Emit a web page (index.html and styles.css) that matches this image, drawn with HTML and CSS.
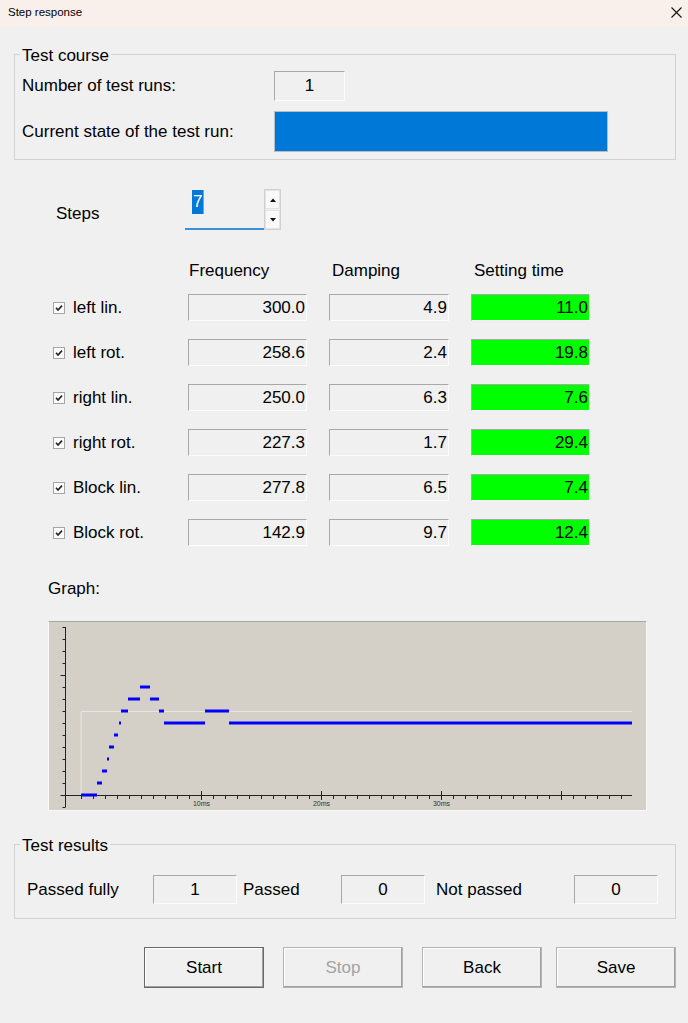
FILE: index.html
```html
<!DOCTYPE html>
<html lang="en">
<head>
    <meta charset="UTF-8">
    <meta name="viewport" content="width=device-width, initial-scale=1.0">
    <title>Step response</title>
    <link rel="stylesheet" href="styles.css">
</head>
<body>
    <div class="titlebar">
        <span class="title">Step response</span>
        <svg class="close" width="11" height="11" viewBox="0 0 11 11">
            <path d="M0.5 0.5 L10.5 10.5 M10.5 0.5 L0.5 10.5" stroke="#111" stroke-width="1.1" fill="none"/>
        </svg>
    </div>

    <!-- Test course -->
    <fieldset class="group group-course">
        <legend>Test course</legend>
        <div class="course-grid">
            <span class="label">Number of test runs:</span>
            <div class="field field-runs">1</div>
            <span class="label">Current state of the test run:</span>
            <div class="progress"><div class="progress-fill"></div></div>
        </div>
    </fieldset>

    <!-- Steps -->
    <div class="steps-row">
        <span class="steps-label">Steps</span>
        <div class="spin">
            <div class="spin-text"><span class="selected">7</span></div>
            <div class="spin-buttons">
                <div class="spin-btn">
                    <svg width="6" height="4" viewBox="0 0 6 4"><path d="M0 4 L3 0.5 L6 4 Z" fill="#111"/></svg>
                </div>
                <div class="spin-btn">
                    <svg width="6" height="4" viewBox="0 0 6 4"><path d="M0 0 L3 3.5 L6 0 Z" fill="#111"/></svg>
                </div>
            </div>
        </div>
    </div>

    <!-- Values table -->
    <div class="table table-head">
        <span></span>
        <span class="col-head">Frequency</span>
        <span class="col-head">Damping</span>
        <span class="col-head">Setting time</span>
    </div>
    <div class="table table-rows" id="rows"></div>

    <!-- Graph -->
    <div class="graph-label">Graph:</div>
    <div class="graph">
        <svg id="graph" width="598" height="189" viewBox="0 0 598 189"></svg>
    </div>

    <!-- Test results -->
    <fieldset class="group group-results">
        <legend>Test results</legend>
        <div class="results-row">
            <span class="res-label res-fully">Passed fully</span>
            <div class="field field-res">1</div>
            <span class="res-label res-passed">Passed</span>
            <div class="field field-res">0</div>
            <span class="res-label res-not">Not passed</span>
            <div class="field field-res">0</div>
        </div>
    </fieldset>

    <div class="buttons">
        <button class="btn btn-default">Start</button>
        <button class="btn" disabled>Stop</button>
        <button class="btn">Back</button>
        <button class="btn btn-last">Save</button>
    </div>

    <script>
        // Axis rows of the step table
        const rows = [
            ['left lin.', '300.0', '4.9', '11.0'],
            ['left rot.', '258.6', '2.4', '19.8'],
            ['right lin.', '250.0', '6.3', '7.6'],
            ['right rot.', '227.3', '1.7', '29.4'],
            ['Block lin.', '277.8', '6.5', '7.4'],
            ['Block rot.', '142.9', '9.7', '12.4']
        ];

        const checkSvg = '<svg class="check" width="12" height="12" viewBox="0 0 12 12">' +
            '<rect x="0.5" y="0.5" width="11" height="11" fill="#fbfbfb" stroke="#a6a6a6"/>' +
            '<path d="M3 5.8 L5 8 L9 3.6" stroke="#222" stroke-width="1.6" fill="none"/></svg>';

        const table = document.getElementById('rows');
        rows.forEach(r => {
            table.insertAdjacentHTML('beforeend',
                `<label class="axis">${checkSvg}<span>${r[0]}</span></label>` +
                `<div class="field field-val">${r[1]}</div>` +
                `<div class="field field-val">${r[2]}</div>` +
                `<div class="field field-val field-ok">${r[3]}</div>`);
        });

        // Graph: axes, ticks and step response
        const svg = document.getElementById('graph');
        let out = '';

        // reference level
        out += '<path d="M32 173 L32 89.5 L583 89.5" stroke="#e9e7e1" stroke-width="1" fill="none"/>';

        // y axis
        out += '<path d="M16.5 5 L16.5 185" stroke="#222" stroke-width="1"/>';
        for (let k = 0; k <= 15; k++) {
            const y = 5.5 + k * 12;
            const len = (k === 4 || k === 14) ? 5 : 3;
            out += `<path d="M${16.5 - len} ${y} L16.5 ${y}" stroke="#222" stroke-width="1"/>`;
        }

        // x axis
        out += '<path d="M12 173.5 L583 173.5" stroke="#222" stroke-width="1"/>';
        for (let k = 0; k <= 45; k++) {
            const x = 32.5 + k * 12;
            const major = k > 0 && k % 10 === 0;
            out += `<path d="M${x} ${major ? 169 : 173.5} L${x} ${major ? 178 : 177}" stroke="#222" stroke-width="1"/>`;
            if (major && k < 40) {
                out += `<text x="${x}" y="184" font-size="7" text-anchor="middle" fill="#333" font-family="Liberation Sans, sans-serif">${k}ms</text>`;
            }
        }

        // step response segments [x1, x2, y]
        const segs = [
            [32, 48, 173], [48, 53, 161], [53, 58, 149], [58, 60, 137],
            [60, 65, 125], [65, 69, 113], [70, 72, 101], [72, 79, 89],
            [79, 91, 77], [91, 101, 65], [101, 110, 77], [110, 115, 89],
            [115, 156, 101], [156, 180, 89], [180, 583, 101]
        ];
        segs.forEach(s => {
            out += `<path d="M${s[0]} ${s[2]} L${s[1]} ${s[2]}" stroke="#0000ff" stroke-width="3"/>`;
        });

        svg.innerHTML = out;
    </script>
</body>
</html>
```

FILE: styles.css
```css
body {
    margin: 0;
    background-color: #f0f0f0;
    font-family: 'Liberation Sans', Arial, sans-serif;
    font-size: 17px;
    line-height: 20px;
    color: #000;
    width: 688px;
}

.titlebar {
    height: 27px;
    background-color: #f9f0ec;
    display: flex;
    align-items: center;
    justify-content: space-between;
    padding: 0 6px 3px 8px;
    box-sizing: border-box;
}

.title {
    font-size: 11.5px;
    line-height: 14px;
}

.close {
    display: block;
}

/* Group boxes */
.group {
    border: 1px solid #d2d2d2;
    margin: 0 12px 0 14px;
    min-width: 0;
}

.group legend {
    padding: 4px 2px 0;
    margin-left: -2px;
    line-height: 20px;
}

.group-course {
    margin-top: 15px;
    padding: 5px 7px 7px 7px;
}

.course-grid {
    display: grid;
    grid-template-columns: 252px auto;
    row-gap: 10px;
    align-items: center;
}

.field {
    box-sizing: border-box;
    border: 1px solid;
    border-color: #a8a8a8 #fcfcfc #fcfcfc #a8a8a8;
    background-color: #f0f0f0;
}

.field-runs {
    width: 71px;
    height: 30px;
    line-height: 28px;
    text-align: center;
}

.progress {
    width: 334px;
    height: 41px;
    box-sizing: border-box;
    border: 1px solid #bcbcbc;
    background-color: #e6e6e6;
    display: flex;
}

.progress-fill {
    flex: 1;
    background-color: #0078d7;
}

/* Steps spinner */
.steps-row {
    display: flex;
    margin-top: 29px;
    padding-left: 56px;
}

.steps-label {
    width: 129px;
    margin-top: 15px;
}

.spin {
    display: flex;
    height: 41px;
}

.spin-text {
    width: 79px;
    box-sizing: border-box;
    border-bottom: 2px solid #3c8fd9;
    padding: 1px 0 0 7px;
}

.selected {
    display: inline-block;
    background-color: #0078d7;
    color: #fff;
    line-height: 24px;
    padding: 0 1px;
    border-right: 1px solid #e88a3c;
}

.spin-buttons {
    display: flex;
    flex-direction: column;
    gap: 1px;
    width: 17px;
    border: 1px solid #d0d0d0;
    box-sizing: border-box;
}

.spin-btn {
    flex: 1;
    background-color: #f9f9f9;
    border: 1px solid #e4e4e4;
    display: flex;
    align-items: center;
    justify-content: center;
}

.spin-btn svg {
    display: block;
}

/* Values table */
.table {
    display: grid;
    grid-template-columns: 113px 119px 120px 119px;
    column-gap: 22px;
    margin-left: 53px;
}

.table-head {
    margin-top: 31px;
}

.col-head {
    padding-left: 1px;
}

.col-head + .col-head {
    padding-left: 3px;
}

.table-rows {
    margin-top: 13px;
    row-gap: 18px;
}

.axis {
    display: flex;
    align-items: center;
    gap: 8px;
}

.check {
    display: block;
}

.field-val {
    height: 27px;
    line-height: 25px;
    text-align: right;
    padding-right: 1px;
}

.field-ok {
    background-color: #00ff00;
}

/* Graph */
.graph-label {
    margin: 33px 0 0 48px;
}

.graph {
    margin: 22px 0 0 48px;
    width: 599px;
    height: 190px;
    box-sizing: border-box;
    border: 1px solid;
    border-color: #a6a6a6 #fafafa #fafafa #fafafa;
    background-color: #d4d0c8;
}

.graph svg {
    display: block;
}

/* Test results */
.group-results {
    margin-top: 21px;
    padding: 19px 7px 14px 12px;
}

.group-results legend {
    margin-left: -7px;
}

.results-row {
    display: flex;
    align-items: center;
}

.field-res {
    width: 84px;
    height: 29px;
    line-height: 27px;
    text-align: center;
}

.res-fully {
    width: 126px;
}

.res-passed {
    width: 98px;
    margin-left: 6px;
}

.res-not {
    width: 138px;
    margin-left: 11px;
}

/* Buttons */
.buttons {
    display: flex;
    gap: 19px;
    margin: 28px 0 0 144px;
}

.btn {
    width: 120px;
    height: 41px;
    font-family: inherit;
    font-size: 17px;
    color: #000;
    background-color: #f0f0f0;
    border: 1px solid #b4b4b4;
    box-shadow: inset -1px -1px 0 #a0a0a0, inset 1px 1px 0 #fff;
    padding: 0;
}

.btn-default {
    border-color: #696969;
}

.btn:disabled {
    color: #a3a3a3;
}

.btn-last {
    margin-left: -5px;
}
```
